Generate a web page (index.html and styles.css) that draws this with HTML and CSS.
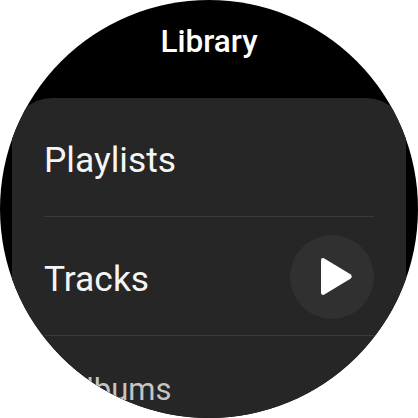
FILE: index.html
```html
<!DOCTYPE html>
<html lang="en">
<head>
<meta charset="utf-8">
<title>Library</title>
<link rel="stylesheet" href="styles.css">
</head>
<body>
<main class="watch">
  <h1 class="title">Library</h1>
  <section class="card">
    <div class="row"><span class="label">Playlists</span></div>
    <div class="row">
      <span class="label">Tracks</span>
      <button class="play" aria-label="Play">
        <svg class="play-icon" viewBox="0 0 32 40" width="31" height="39"><path d="M3 1.2 L30.4 17.6 Q33 20 30.4 22.4 L3 38.8 Q0 39.6 0 36.6 V3.4 Q0 0.4 3 1.2 Z"/></svg>
      </button>
    </div>
    <div class="row row-last"><span class="label label-dim">Albums</span></div>
  </section>
</main>
</body>
</html>
```
FILE: styles.css
```css
* { box-sizing: border-box; }
html, body { margin: 0; width: 418px; height: 418px; background: #fff; overflow: hidden; }
.watch {
  width: 418px;
  height: 418px;
  border-radius: 50%;
  background: #000;
  overflow: hidden;
  font-family: Roboto, "Liberation Sans", sans-serif;
  display: flex;
  flex-direction: column;
}
.title {
  margin: 0;
  height: 98px;
  padding-top: 23px;
  flex: none;
  text-align: center;
  color: #fff;
  font-size: 31.5px;
  line-height: 38px;
  font-weight: 470;
}
.card {
  flex: none;
  margin: 0 12px;
  height: 400px;
  padding: 0 32px;
  background: #262626;
  border-radius: 40px 40px 0 0;
}
.row {
  height: 119px;
  padding-top: 6px;
  display: flex;
  align-items: center;
  justify-content: space-between;
  border-bottom: 1px solid #3a3a3a;
}
.row-last { height: 100px; border-bottom: 0; justify-content: flex-start; }
.label { color: #f5f5f5; font-size: 35.4px; font-weight: 370; }
.label-dim { color: #c4c4c4; font-size: 31px; margin-left: 22px; }
.play {
  width: 84px;
  height: 84px;
  padding: 0;
  margin-top: -5px;
  border: 0;
  border-radius: 50%;
  background: #303030;
  display: flex;
  align-items: center;
  justify-content: center;
}
.play-icon { fill: #fff; margin-left: 9px; }
```
